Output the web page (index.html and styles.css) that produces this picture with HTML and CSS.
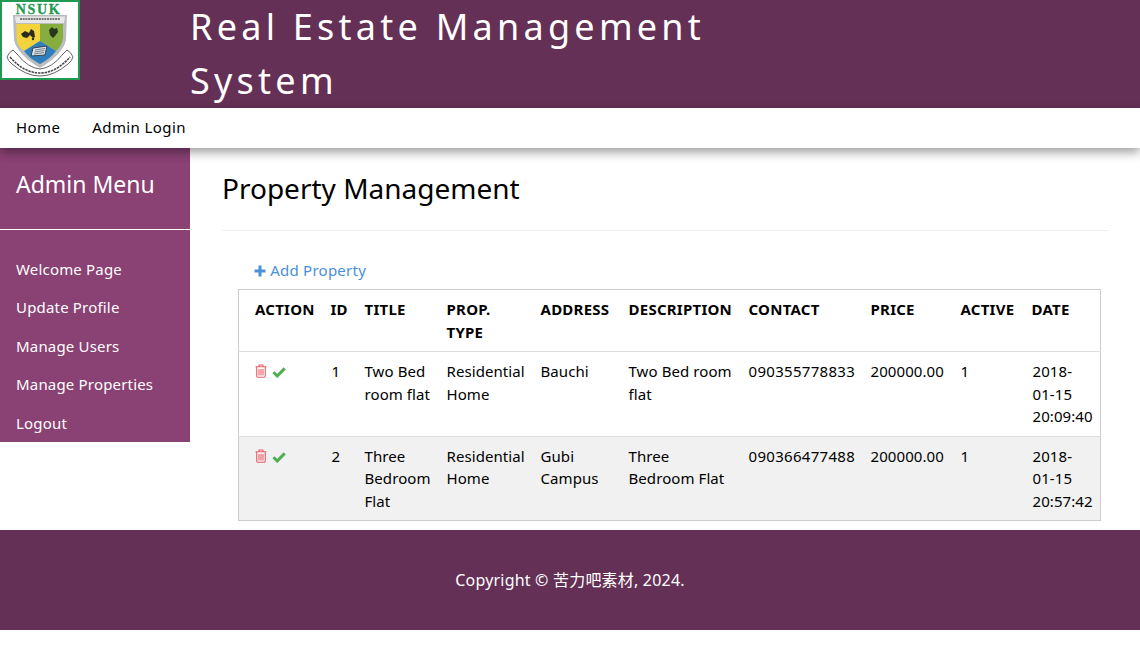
FILE: index.html
```html
<!DOCTYPE html>
<html lang="en">
<head>
<meta charset="utf-8">
<title>Real Estate Management System</title>
<link rel="stylesheet" href="styles.css">
</head>
<body>
<header class="banner">
  <div class="logo">
    <svg viewBox="0 0 80 80" width="80" height="80" role="img" aria-label="NSUK crest">
      <rect x="1" y="1" width="78" height="78" fill="#fff" stroke="#1f9a50" stroke-width="2"/>
      <text x="38.5" y="13.5" class="logo-text" text-anchor="middle">NSUK</text>
      <path d="M13 15H67L66 40Q63 54 40 68Q17 54 14 40Z" fill="#b9bdbd"/>
      <path d="M15 16.5H65L64 23H16Z" fill="#e8e8e8"/>
      <path d="M20 19H60" stroke="#555" stroke-width="1.6" stroke-dasharray="2 0.7"/>
      <path d="M16.5 24H40V41L24 51Q17 46 16.5 38Z" fill="#f3d33b"/>
      <path d="M40 24H63V38Q62 46 56 51L40 41Z" fill="#86ad3d"/>
      <path d="M40 41L56 51Q50 59 40 64Q30 59 24 51Z" fill="#2f7fbe"/>
      <path d="M21 34L25 31L29 33L31 29L34 31L35 37L33 38L30 35L27 38L23 37Z" fill="#2b2a20"/>
      <circle cx="33" cy="39" r="1.2" fill="#2b2a20"/>
      <path d="M49 30L52 27L54 29L57 28L58 32L55 36L53 38L50 35Z" fill="#27361d"/>
      <path d="M33 48L47 46L45 55L31 56Z" fill="#d8e2e8" stroke="#37424a" stroke-width="1"/>
      <path d="M35 50L45 48.500M34.500 52L44.500 50.500M34 54L44 52.500" stroke="#37424a" stroke-width="0.6"/>
      <path d="M7 57Q9 52 13 50L17 54Q28 68 40 69Q52 68 63 54L67 50Q71 52 73 57Q72 61 68 64Q54 76 40 76Q26 76 12 64Q8 61 7 57Z" fill="#fff" stroke="#666" stroke-width="1"/>
      <path d="M10 57Q24 73 40 73Q56 73 70 57" fill="none" stroke="#444" stroke-width="1.5" stroke-dasharray="2.500 0.800"/>
    </svg>
  </div>
  <h1 class="site-title">Real Estate Management System</h1>
</header>
<nav class="topnav">
  <a href="#">Home</a>
  <a href="#">Admin Login</a>
</nav>
<div class="layout">
  <aside class="sidebar">
    <h2 class="side-title">Admin Menu</h2>
    <ul class="side-menu">
      <li><a href="#">Welcome Page</a></li>
      <li><a href="#">Update Profile</a></li>
      <li><a href="#">Manage Users</a></li>
      <li><a href="#">Manage Properties</a></li>
      <li><a href="#">Logout</a></li>
    </ul>
  </aside>
  <main class="content">
    <h2 class="page-title">Property Management</h2>
    <hr class="rule">
    <a class="add-link" href="#">
      <svg class="icon-plus" viewBox="0 0 12 12" width="12" height="12"><path d="M4.5 0.5H7.5V4.5H11.5V7.5H7.5V11.5H4.5V7.5H0.5V4.5H4.5Z" fill="currentColor"/></svg>
      Add Property
    </a>
    <table class="grid">
      <colgroup>
        <col class="c1"><col class="c2"><col class="c3"><col class="c4"><col class="c5"><col class="c6"><col class="c7"><col class="c8"><col class="c9"><col class="c10">
      </colgroup>
      <thead>
        <tr><th>ACTION</th><th>ID</th><th>TITLE</th><th>PROP. TYPE</th><th>ADDRESS</th><th>DESCRIPTION</th><th>CONTACT</th><th>PRICE</th><th>ACTIVE</th><th>DATE</th></tr>
      </thead>
      <tbody>
        <tr>
          <td class="actions">
            <svg class="icon-trash" viewBox="0 0 12 14" width="12" height="14"><path d="M4 2.5V1H8V2.5M0.5 2.8H11.5M1.7 3V12Q1.7 13.3 3 13.3H9Q10.3 13.3 10.3 12V3M4 5V11.5M6 5V11.5M8 5V11.5" fill="none" stroke="currentColor" stroke-width="1.1"/></svg>
            <svg class="icon-check" viewBox="0 0 14 12" width="14" height="12"><path d="M1.5 6.3L5.2 10L12.7 2.4" fill="none" stroke="currentColor" stroke-width="3"/></svg>
          </td>
          <td class="num">1</td><td>Two Bed room flat</td><td>Residential Home</td><td>Bauchi</td><td>Two Bed room flat</td><td class="phone">090355778833</td><td>200000.00</td><td>1</td><td class="num">2018-01-15 20:09:40</td>
        </tr>
        <tr class="alt">
          <td class="actions">
            <svg class="icon-trash" viewBox="0 0 12 14" width="12" height="14"><path d="M4 2.5V1H8V2.5M0.5 2.8H11.5M1.7 3V12Q1.7 13.3 3 13.3H9Q10.3 13.3 10.3 12V3M4 5V11.5M6 5V11.5M8 5V11.5" fill="none" stroke="currentColor" stroke-width="1.1"/></svg>
            <svg class="icon-check" viewBox="0 0 14 12" width="14" height="12"><path d="M1.5 6.3L5.2 10L12.7 2.4" fill="none" stroke="currentColor" stroke-width="3"/></svg>
          </td>
          <td class="num">2</td><td>Three Bedroom Flat</td><td>Residential Home</td><td>Gubi Campus</td><td>Three Bedroom Flat</td><td class="phone">090366477488</td><td>200000.00</td><td>1</td><td class="num">2018-01-15 20:57:42</td>
        </tr>
      </tbody>
    </table>
  </main>
</div>
<footer class="footer">Copyright © 苦力吧素材, 2024.</footer>
</body>
</html>
```
FILE: styles.css
```css
* { box-sizing: border-box; }
html, body { margin: 0; padding: 0; background: #fff; }
body {
  font-family: "Noto Sans", "Noto Sans CJK SC", sans-serif;
  font-size: 15px;
  line-height: 22.5px;
  color: #000;
}
a { text-decoration: none; color: inherit; }

.banner {
  display: flex;
  height: 108px;
  background: #643055;
  color: #fff;
}
.logo { width: 190px; height: 80px; flex: none; }
.logo svg { display: block; }
.logo-text { font-family: "Liberation Serif", serif; font-weight: 700; font-size: 14px; letter-spacing: 1.6px; fill: #1f9a50; stroke: #1f9a50; stroke-width: 0.3px; }
.site-title {
  margin: 0;
  width: 560px;
  font-size: 36px;
  font-weight: 400;
  line-height: 54px;
  letter-spacing: 4.25px;
}

.topnav {
  position: relative;
  z-index: 1;
  display: flex;
  gap: 32px;
  height: 40px;
  padding: 8px 16px;
  background: #fff;
  box-shadow: 0 4px 10px 0 rgba(0, 0, 0, 0.4);
  font-size: 15px;
  letter-spacing: 0.4px;
}

.layout { display: flex; height: 382px; }
.sidebar {
  flex: none;
  width: 190px;
  height: 294px;
  background: #8a4173;
  color: #fff;
}
.side-title {
  margin: 0;
  height: 82px;
  padding: 18px 16px 0;
  border-bottom: 1px solid #fff;
  font-size: 23px;
  font-weight: 400;
  line-height: 36px;
}
.side-menu {
  list-style: none;
  margin: 0;
  padding: 18.5px 16px 0;
  font-size: 15px;
  letter-spacing: 0.18px;
}
.side-menu li { height: 38.5px; line-height: 40px; }

.content { flex: 1; padding: 22px 32px 0; min-width: 0; }
.page-title {
  margin: 0;
  font-size: 28px;
  font-weight: 400;
  line-height: 36px;
}
.rule { margin: 24px 0 28px; border: 0; border-top: 1px solid #eee; }
.add-link {
  display: block;
  height: 30px;
  margin-left: 32px;
  color: #4a90d9;
  letter-spacing: 0.25px;
}
.icon-plus { vertical-align: -1px; }
.grid {
  margin-left: 16px;
  width: 862px;
  table-layout: fixed;
  border-collapse: collapse;
  border: 1px solid #ccc;
}
.c1 { width: 84px; } .c2 { width: 34px; } .c3 { width: 82px; } .c4 { width: 94px; } .c5 { width: 88px; }
.c6 { width: 120px; } .c7 { width: 122px; } .c8 { width: 90px; } .c9 { width: 71px; } .c10 { width: 77px; }
.grid th, .grid td {
  padding: 8px;
  text-align: left;
  vertical-align: top;
}
.grid th { font-weight: 700; border-bottom: 1px solid #ddd; letter-spacing: 0.25px; }
.grid td { font-weight: 400; letter-spacing: 0.08px; }
.grid td.phone { letter-spacing: 0.3px; }
.grid tr > :first-child { padding-left: 16px; }
.grid tbody tr + tr td { border-top: 1px solid #ddd; }
.grid td.num { padding-left: 9px; }
.alt { background: #f1f1f1; }
.actions { white-space: nowrap; }
.actions svg { vertical-align: -1px; }
.icon-trash { color: #e8626a; }
.icon-check { color: #4caf50; margin-left: 1px; }

.footer {
  height: 100px;
  padding-top: 39px;
  background: #643055;
  color: #fff;
  text-align: center;
  font-size: 16px;
  letter-spacing: 0.2px;
}
```
